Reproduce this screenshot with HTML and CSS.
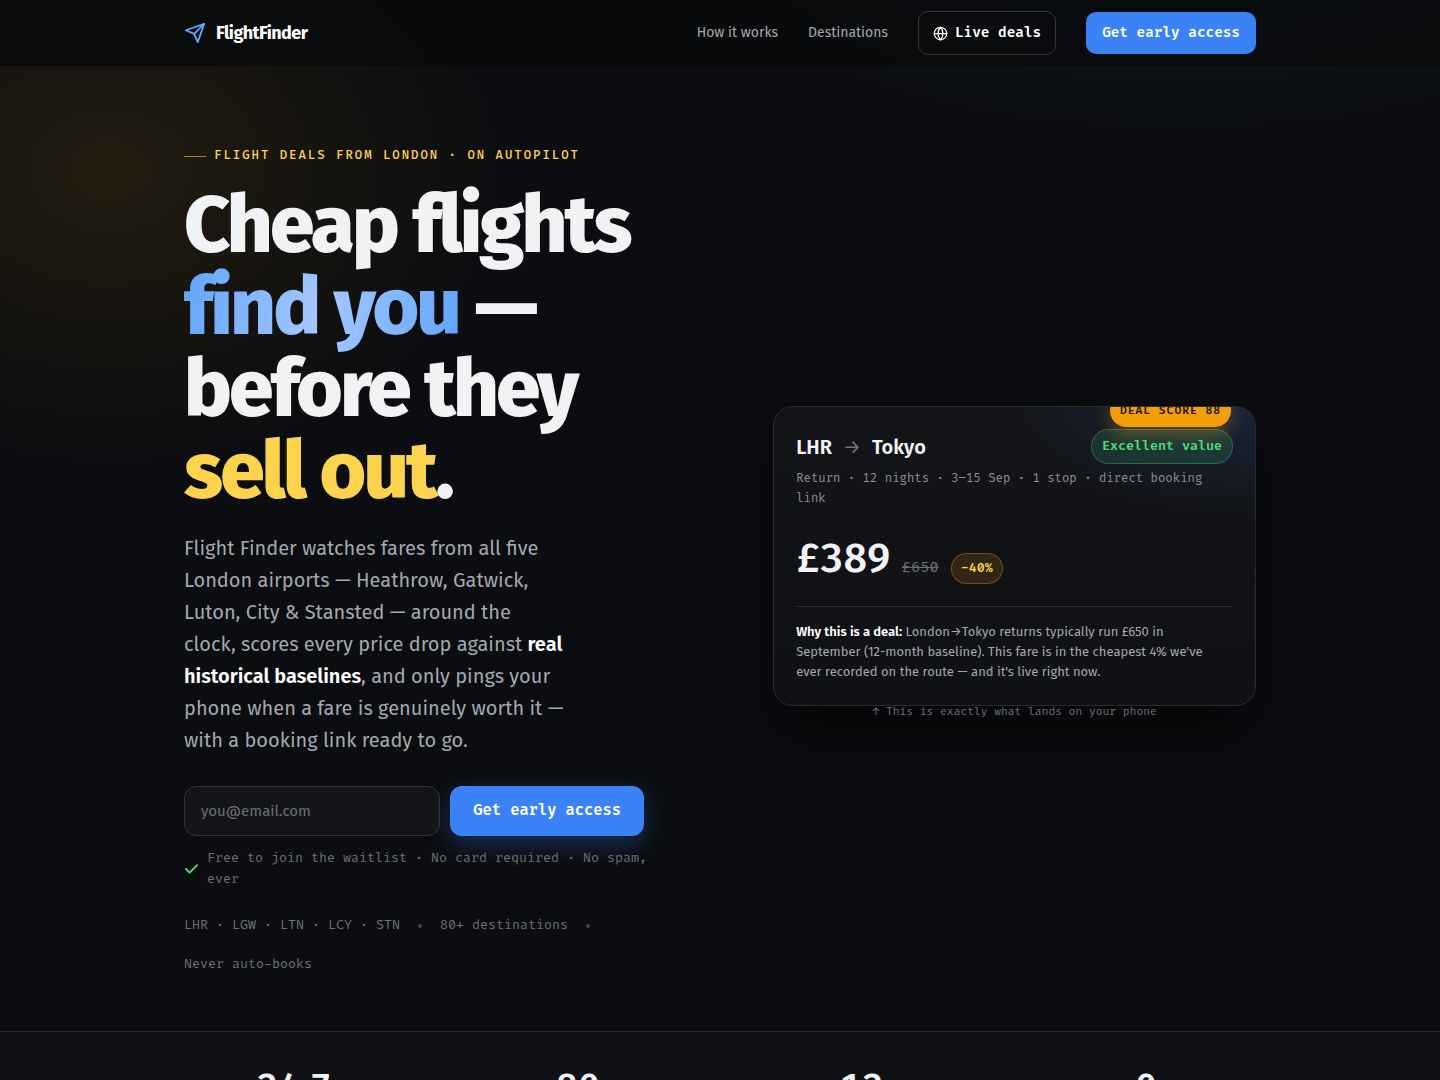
FILE: index.html
```html
<!DOCTYPE html>
<html lang="en">
<head>
  <meta charset="UTF-8">
  <title>FlightFinder - Cheap flights find you</title>
  <meta name="viewport" content="width=device-width, initial-scale=1.0">
  <link rel="stylesheet" href="styles.css">
</head>
<body>
  <header class="nav">
    <div class="container nav-inner">
      <a class="brand" href="#top">
        <svg class="brand-icon" viewBox="0 0 24 24" fill="none" stroke="currentColor" stroke-width="2" stroke-linecap="round" stroke-linejoin="round" aria-hidden="true">
          <path d="M22 2 15 22 11 13 2 9Z"/>
          <path d="M22 2 11 13"/>
        </svg>
        <span>FlightFinder</span>
      </a>
      <nav class="nav-links">
        <a href="#how">How it works</a>
        <a href="#destinations">Destinations</a>
        <a class="btn btn-ghost" href="#deals">
          <svg class="btn-icon" viewBox="0 0 24 24" fill="none" stroke="currentColor" stroke-width="2" stroke-linecap="round" aria-hidden="true">
            <circle cx="12" cy="12" r="10"/>
            <path d="M2 12h20"/>
            <path d="M12 2a15 15 0 0 1 4 10 15 15 0 0 1-4 10 15 15 0 0 1-4-10 15 15 0 0 1 4-10z"/>
          </svg>
          Live deals
        </a>
        <a class="btn btn-primary" href="#join">Get early access</a>
      </nav>
    </div>
  </header>

  <main id="top">
    <section class="container hero">
      <div class="hero-copy">
        <p class="eyebrow">Flight deals from London · on autopilot</p>
        <h1>Cheap flights <span class="blue">find you</span> — before they <span class="gold">sell out</span>.</h1>
        <p class="lead">Flight Finder watches fares from all five London airports — Heathrow, Gatwick, Luton, City &amp; Stansted — around the clock, scores every price drop against <strong>real historical baselines</strong>, and only pings your phone when a fare is genuinely worth it — with a booking link ready to go.</p>
        <form class="signup" id="join">
          <input type="email" placeholder="you@email.com" aria-label="Email address">
          <button class="btn btn-primary btn-large" type="submit">Get early access</button>
        </form>
        <p class="note">
          <svg class="note-icon" viewBox="0 0 24 24" fill="none" stroke="currentColor" stroke-width="3" stroke-linecap="round" stroke-linejoin="round" aria-hidden="true">
            <path d="M21 5 9 17l-6-6"/>
          </svg>
          <span>Free to join the waitlist · No card required · No spam, ever</span>
        </p>
        <div class="facts">
          <span>LHR · LGW · LTN · LCY · STN</span>
          <i class="dot"></i>
          <span>80+ destinations</span>
          <i class="dot"></i>
          <span>Never auto-books</span>
        </div>
      </div>

      <div class="deal-wrap">
        <article class="deal">
          <span class="score">Deal score 88</span>
          <div class="deal-top">
            <h2 class="route">LHR <span class="arrow">→</span> Tokyo</h2>
            <span class="value">Excellent value</span>
          </div>
          <p class="deal-meta">Return · 12 nights · 3–15 Sep · 1 stop · direct booking link</p>
          <div class="prices">
            <span class="price">£389</span>
            <s class="was">£650</s>
            <span class="drop">-40%</span>
          </div>
          <p class="why"><strong>Why this is a deal:</strong> London→Tokyo returns typically run £650 in September (12-month baseline). This fare is in the cheapest 4% we've ever recorded on the route — and it's live right now.</p>
        </article>
        <p class="caption">↑ This is exactly what lands on your phone</p>
      </div>
    </section>

    <section class="stats">
      <div class="container stats-grid">
        <div class="stat">24<span class="slash">/</span>7</div>
        <div class="stat">80</div>
        <div class="stat">12</div>
        <div class="stat">0</div>
      </div>
    </section>
  </main>
</body>
</html>
```
FILE: styles.css
```css
* {
  box-sizing: border-box;
}
body {
  margin: 0;
  font-family: "Fira Sans", "Noto Sans", sans-serif;
  font-size: 16px;
  line-height: 1.6;
  color: #f1f2f4;
  background:
    radial-gradient(560px 420px at 110px 170px, rgba(245,158,11,0.10), transparent 70%),
    radial-gradient(700px 300px at 1180px -80px, rgba(59,130,246,0.12), transparent 70%),
    #0b0d10;
}
h1, h2, p {
  margin: 0;
}
a {
  color: inherit;
  text-decoration: none;
}
.container {
  max-width: 1120px;
  margin: 0 auto;
  padding: 0 24px;
}

/* Nav */
.nav {
  background: rgba(9,10,11,0.8);
}
.nav-inner {
  display: flex;
  align-items: center;
  justify-content: space-between;
  height: 66px;
}
.brand {
  display: flex;
  align-items: center;
  gap: 10px;
  font-size: 18px;
  font-weight: 700;
  letter-spacing: -0.03em;
  color: #fff;
}
.brand-icon {
  width: 22px;
  height: 22px;
  color: #60a5fa;
}
.nav-links {
  display: flex;
  align-items: center;
  gap: 30px;
  font-size: 14px;
  color: #a3a7b0;
}
.btn {
  display: inline-flex;
  align-items: center;
  justify-content: center;
  gap: 7px;
  padding: 9px 15px;
  border: 1px solid transparent;
  border-radius: 10px;
  font-family: "Fira Code", "DejaVu Sans Mono", monospace;
  font-size: 14px;
  font-weight: 600;
  line-height: 22px;
  color: #fff;
}
.btn-ghost {
  padding: 10px 14px;
  border-color: #34363c;
}
.btn-icon {
  width: 15px;
  height: 15px;
}
.btn-primary {
  background: #3b82f6;
}
.btn-large {
  padding: 12px 22px;
  border-radius: 12px;
  font-size: 15px;
  box-shadow: 0 8px 24px rgba(59,130,246,0.3);
}

/* Hero */
.hero {
  display: grid;
  grid-template-columns: 1.1fr 1fr;
  gap: 58px;
  align-items: center;
  padding-top: 80px;
  padding-bottom: 56px;
}
.eyebrow {
  display: flex;
  align-items: center;
  gap: 8px;
  font-family: "Fira Code", "DejaVu Sans Mono", monospace;
  font-size: 12px;
  font-weight: 500;
  line-height: 20px;
  letter-spacing: 2px;
  text-transform: uppercase;
  color: #fcd34d;
}
.eyebrow::before {
  content: "";
  width: 22px;
  height: 1px;
  background: #b87a14;
}
h1 {
  max-width: 500px;
  margin-top: 18px;
  font-size: 80px;
  font-weight: 800;
  line-height: 82px;
  letter-spacing: -0.035em;
}
.blue {
  background: linear-gradient(100deg, #60a5fa, #a5c8ff 50%, #60a5fa);
  background-clip: text;
  -webkit-background-clip: text;
  color: transparent;
}
.gold {
  color: #fcd34d;
}
.lead {
  max-width: 382px;
  margin-top: 20px;
  font-size: 20px;
  line-height: 32px;
  color: #a3a7b0;
}
.lead strong {
  font-weight: 600;
  color: #fff;
}
.signup {
  display: flex;
  gap: 10px;
  max-width: 460px;
  margin-top: 30px;
}
.signup input {
  flex: 1;
  min-width: 0;
  height: 50px;
  padding: 0 16px;
  border: 1px solid #303238;
  border-radius: 12px;
  background: #131519;
  font-family: inherit;
  font-size: 15px;
  color: #f1f2f4;
}
.signup input::placeholder {
  color: #6b6f79;
}
.note {
  display: flex;
  align-items: center;
  gap: 8px;
  max-width: 470px;
  margin-top: 12px;
}
.note,
.facts {
  font-family: "Fira Code", "DejaVu Sans Mono", monospace;
  font-size: 13px;
  line-height: 21px;
  color: #6b6f79;
}
.note-icon {
  flex: none;
  width: 15px;
  height: 15px;
  color: #4ade80;
}
.facts {
  display: flex;
  flex-wrap: wrap;
  align-items: center;
  gap: 18px;
  margin-top: 25px;
}
.dot {
  width: 4px;
  height: 4px;
  border-radius: 50%;
  background: #44474f;
}

/* Deal card */
.deal-wrap {
  position: relative;
  padding-bottom: 9px;
}
.deal {
  position: relative;
  overflow: hidden;
  padding: 22px 22px 23px;
  border: 1px solid #272a30;
  border-radius: 20px;
  background:
    radial-gradient(320px 140px at 100% 0, rgba(59,130,246,0.15), transparent 80%),
    linear-gradient(#141519, #101115);
  box-shadow: 0 30px 60px rgba(0,0,0,0.5);
}
.score {
  position: absolute;
  top: -13px;
  right: 24px;
  padding: 7px 10px;
  border-radius: 999px;
  background: #f59e0b;
  box-shadow: 0 6px 18px rgba(245,158,11,0.35);
  font-family: "Fira Code", "DejaVu Sans Mono", monospace;
  font-size: 11px;
  font-weight: 600;
  line-height: 19px;
  letter-spacing: 1px;
  text-transform: uppercase;
  color: #201503;
}
.deal-top {
  display: flex;
  align-items: center;
  justify-content: space-between;
}
.route {
  display: flex;
  align-items: center;
  gap: 11px;
  font-size: 20px;
  font-weight: 600;
  line-height: 32px;
}
.arrow {
  font-weight: 400;
  color: #6b6f79;
}
.value,
.drop {
  border: 1px solid;
  border-radius: 999px;
  font-family: "Fira Code", "DejaVu Sans Mono", monospace;
  font-size: 13px;
  font-weight: 600;
  line-height: 21px;
}
.value {
  padding: 6px 10px;
  border-color: rgba(74,222,128,0.3);
  background: rgba(74,222,128,0.14);
  color: #4ade80;
}
.deal-meta {
  margin-top: 5px;
  font-family: "Fira Code", "DejaVu Sans Mono", monospace;
  font-size: 12px;
  line-height: 20px;
  color: #8b8f99;
}
.prices {
  display: flex;
  align-items: baseline;
  gap: 12px;
  margin-top: 30px;
  font-family: "Fira Code", "DejaVu Sans Mono", monospace;
}
.price {
  font-size: 40px;
  font-weight: 600;
  line-height: 42px;
  letter-spacing: -0.03em;
}
.was {
  font-size: 15px;
  color: #6b6f79;
}
.drop {
  padding: 4px 9px;
  border-color: rgba(245,158,11,0.35);
  background: rgba(245,158,11,0.14);
  color: #fcd34d;
}
.why {
  margin-top: 22px;
  padding: 15px 12px 0 0;
  border-top: 1px solid #272a30;
  font-size: 13px;
  line-height: 20px;
  color: #a3a7b0;
}
.why strong {
  font-weight: 600;
  color: #fff;
}
.caption {
  position: absolute;
  top: 100%;
  left: 0;
  right: 0;
  margin-top: -12px;
  text-align: center;
  font-family: "Fira Code", "DejaVu Sans Mono", monospace;
  font-size: 11px;
  line-height: 18px;
  color: #6b6f79;
}

/* Stats */
.stats {
  border-top: 1px solid #25272c;
  background: #101115;
}
.stats-grid {
  display: grid;
  grid-template-columns: repeat(4, 1fr);
  max-width: 1184px;
  padding-top: 34px;
  padding-bottom: 34px;
}
.stat {
  text-align: center;
  font-family: "Fira Code", "DejaVu Sans Mono", monospace;
  font-size: 36px;
  font-weight: 600;
  line-height: 44px;
}
.slash {
  font-size: 14px;
}
```
